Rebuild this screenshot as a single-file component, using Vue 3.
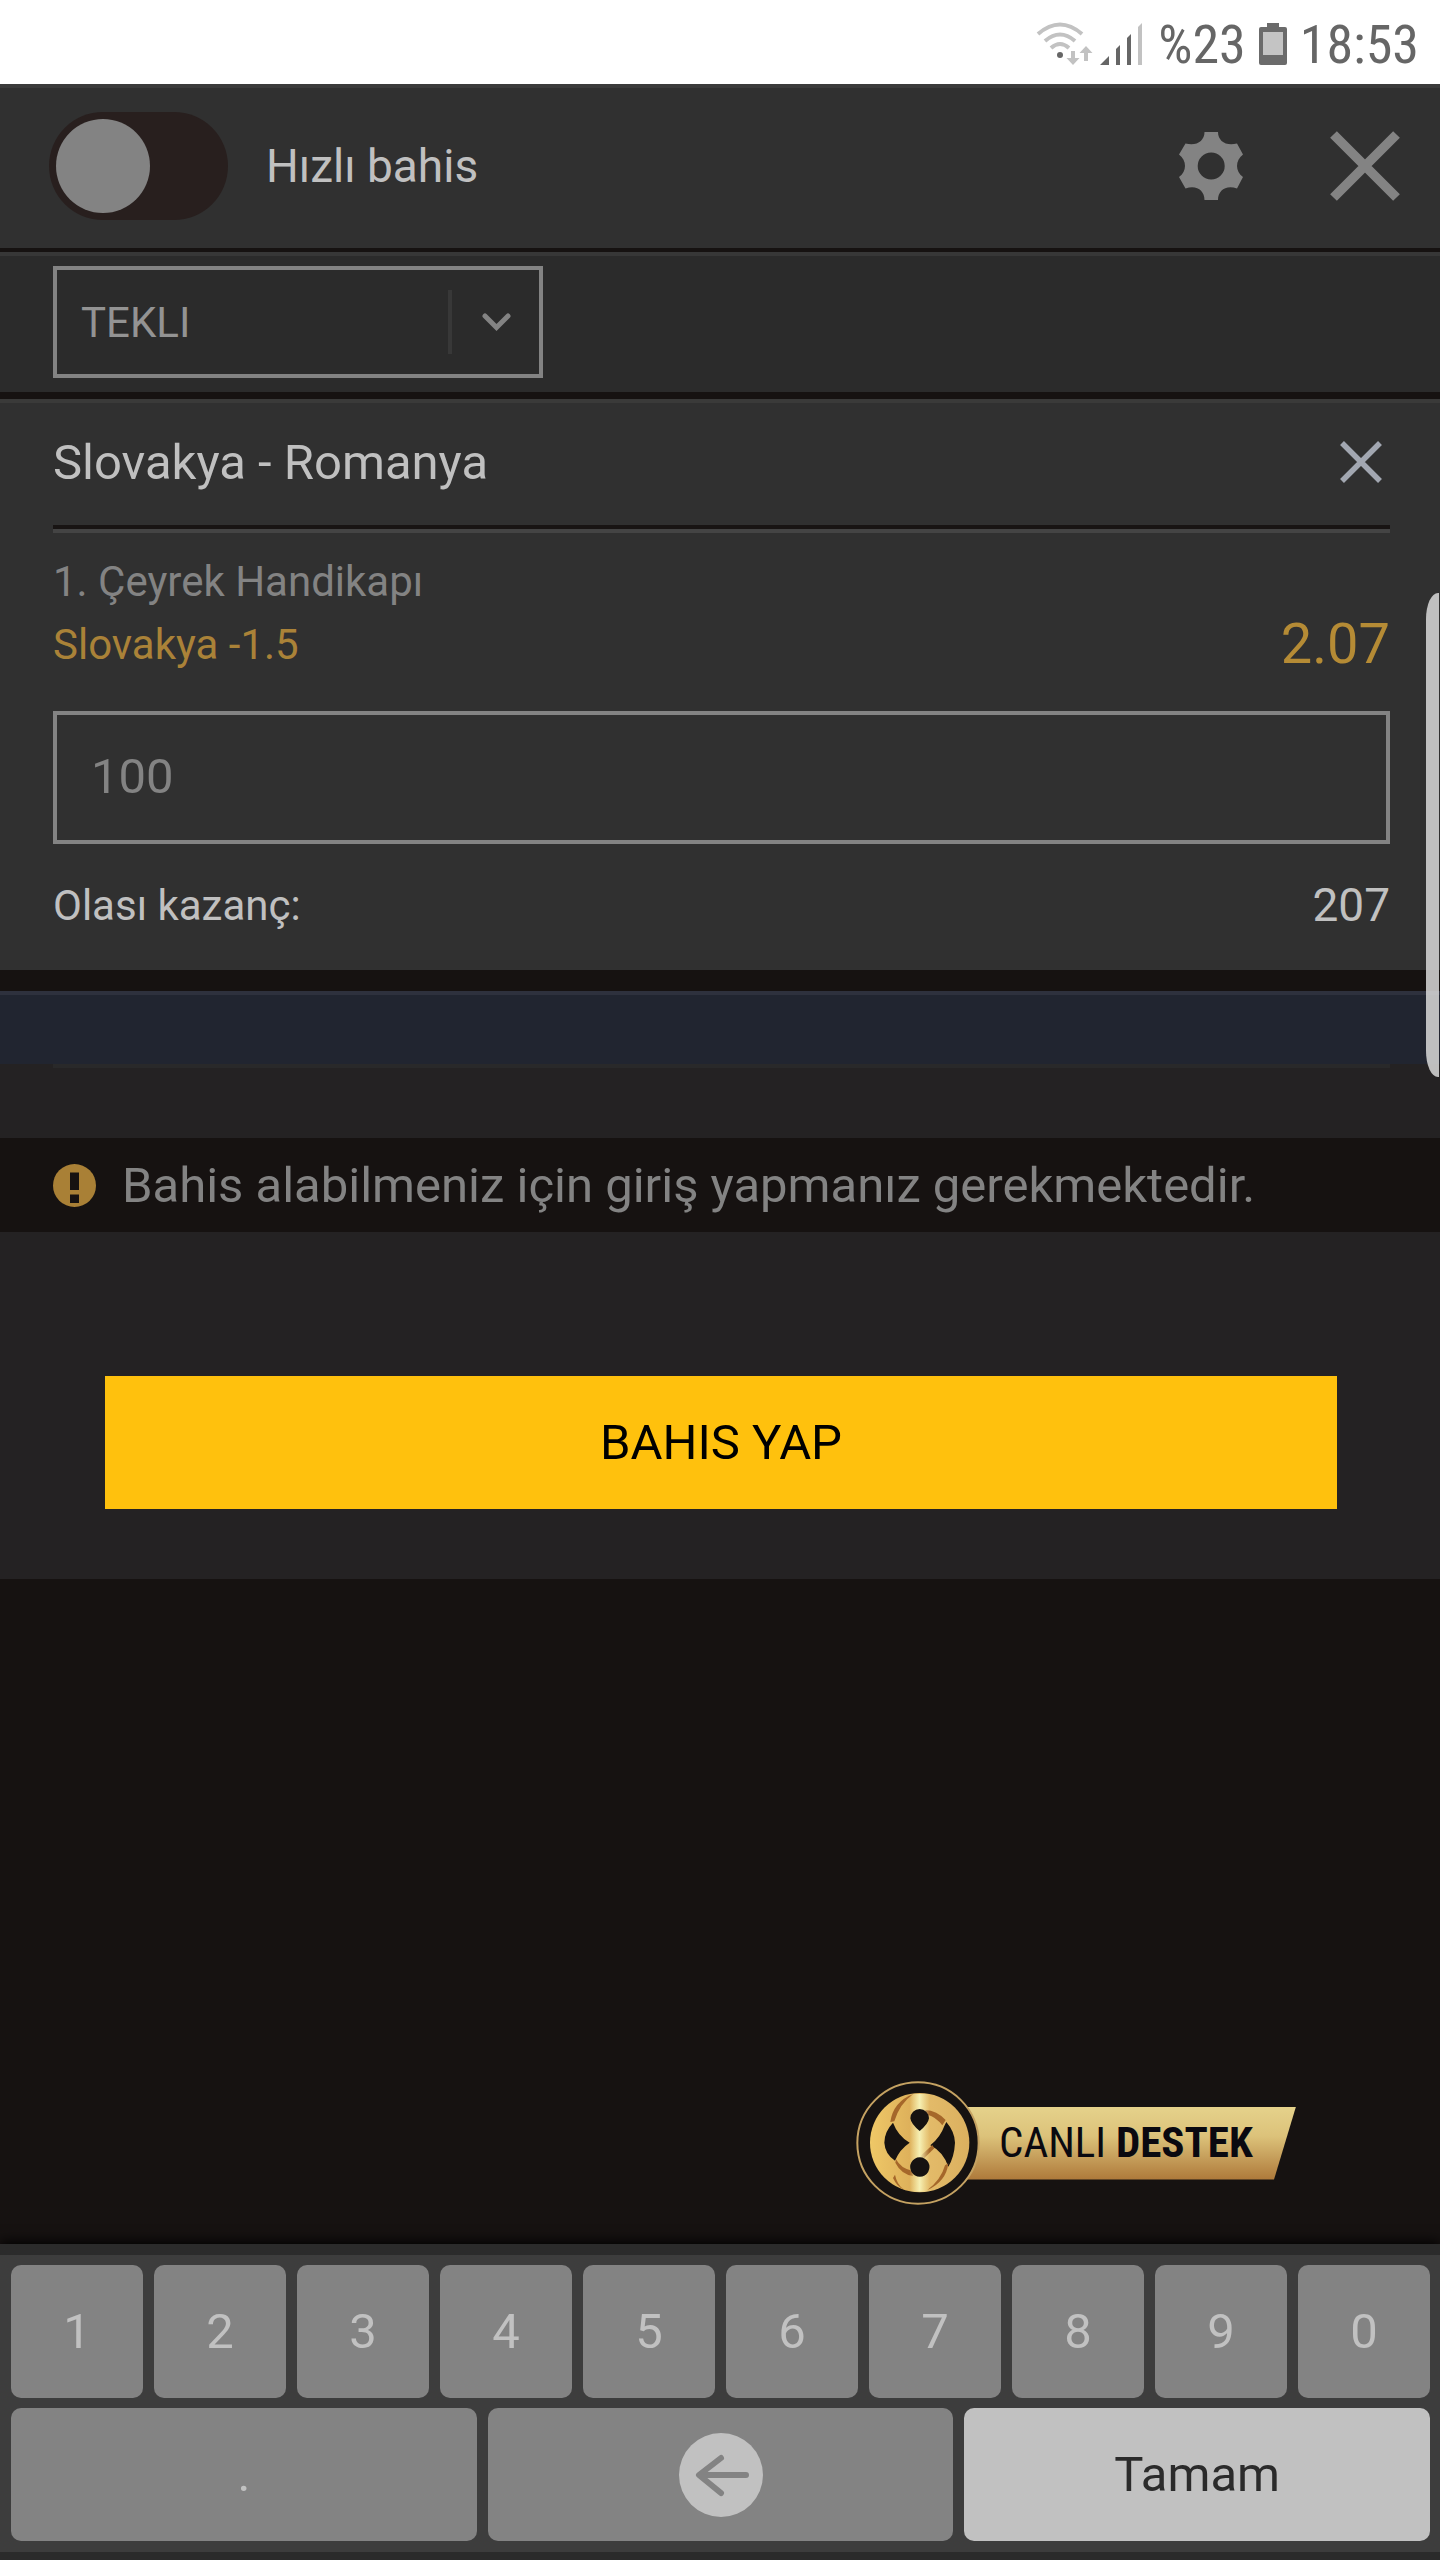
<script setup>
import { ref } from 'vue'

const quickBet = ref(false)
const betType = ref('tekli')
const stake = ref('100')
const digits = ['1', '2', '3', '4', '5', '6', '7', '8', '9', '0']

function press(key) {
  stake.value += key
}
function erase() {
  stake.value = stake.value.slice(0, -1)
}
</script>

<template>
  <div class="screen">
    <div class="status">
      <svg class="wifi" width="58" height="44" viewBox="0 0 58 44" aria-hidden="true">
        <g fill="none" stroke="#c2c2c2" stroke-width="4">
          <path d="M2 12Q24 -7 46 12" />
          <path d="M9 19Q24 6 39 19" />
          <path d="M15 26Q24 18 33 26" />
        </g>
        <circle cx="24" cy="33" r="3" fill="#666" />
        <path d="M35 29h4v7h4.500L37 43l-6.500-7H35zM48 39h4v-8h4.500L50 24l-6.500 7H48z" fill="#c2c2c2" />
      </svg>
      <svg class="signal" width="43" height="42" viewBox="0 0 43 42" aria-hidden="true">
        <path d="M0 42l9-9v9zM16 42V26l4-4v20zM27 42V15l4-4v31z" fill="#666" />
        <path d="M38 42V4l4-4v42z" fill="#c2c2c2" />
      </svg>
      <span class="percent">%23</span>
      <svg class="battery" width="28" height="42" viewBox="0 0 28 42" aria-hidden="true">
        <path d="M8 0h12v4h6q2 0 2 2v34q0 2-2 2H2q-2 0-2-2V6q0-2 2-2h6z" fill="#6b6b6b" />
        <path d="M4 9h20v23H4z" fill="#c4c4c4" />
      </svg>
      <span class="clock">18:53</span>
    </div>

    <header class="top">
      <label class="quick">
        <input v-model="quickBet" type="checkbox" class="switch" />
        <span>Hızlı bahis</span>
      </label>
      <button type="button" class="icon gear" aria-label="Ayarlar">
        <svg width="64" height="68" viewBox="0 0 64 68">
          <path fill="#838383" fill-rule="evenodd" d="M25.500 0h13.500c0 9 8 14.500 19 11.500l6 11c-8 6-8 17 0 22.500l-6 11.500c-11-4-19 2-19 11.500h-13.500c0-9.500-8-15.500-19-11.500l-6.500-11.500c8-5.500 8-16.500 0-22.500l6.500-11c11 3 19-2.500 19-11.500zM32.200 20.500a13.500 13.500 0 1 0 0 27a13.500 13.500 0 1 0 0-27z" />
        </svg>
      </button>
      <button type="button" class="icon" aria-label="Kapat">
        <svg width="70" height="70" viewBox="0 0 70 70">
          <path d="M3.500 3.500l63 63M66.500 3.500l-63 63" stroke="#838383" stroke-width="9.500" />
        </svg>
      </button>
    </header>

    <div class="type-bar">
      <div class="picker">
        <select v-model="betType" aria-label="Bahis türü">
          <option value="tekli">TEKLI</option>
        </select>
        <svg class="arrow" width="64" height="64" viewBox="0 0 64 64" aria-hidden="true">
          <path d="M0 0h4v64H0z" fill="#383838" />
          <path d="M37 26l11.500 11.500L60 26" fill="none" stroke="#838383" stroke-width="5" stroke-linecap="round" />
        </svg>
      </div>
    </div>

    <main>
      <section class="bet">
        <div class="match">
          <h1>Slovakya - Romanya</h1>
          <button type="button" class="icon" aria-label="Sil">
            <svg width="42" height="42" viewBox="0 0 42 42">
              <path d="M2 2l38 38M40 2L2 40" stroke="#a2a7b1" stroke-width="5.500" />
            </svg>
          </button>
        </div>
        <div class="market">1. Çeyrek Handikapı</div>
        <div class="pick">
          <span>Slovakya -1.5</span>
          <span class="odds">2.07</span>
        </div>
        <input v-model="stake" class="stake" type="text" inputmode="decimal" aria-label="Miktar" />
        <div class="win">
          <span>Olası kazanç:</span>
          <output>207</output>
        </div>
      </section>

      <div class="band"></div>
      <section class="place">
        <div class="rule"></div>
        <p class="notice">
          <svg width="43" height="43" viewBox="0 0 43 43" aria-hidden="true">
            <circle cx="21.500" cy="21.500" r="21.500" fill="#a98036" />
            <path d="M17 8.500h9V26h-9zM17 30.500h9V39h-9z" fill="#161211" />
          </svg>
          <span>Bahis alabilmeniz için giriş yapmanız gerekmektedir.</span>
        </p>
        <button type="button" class="submit">BAHIS YAP</button>
      </section>
    </main>

    <div class="rest">
      <button type="button" class="support">
        <svg class="logo" width="124" height="124" viewBox="49 63 372 372" aria-hidden="true">
          <defs>
            <linearGradient id="gold" x1="0" x2="1">
              <stop offset="0" stop-color="#efc867" />
              <stop offset="0.400" stop-color="#deb15b" />
              <stop offset="0.500" stop-color="#e5bd6b" />
              <stop offset="1" stop-color="#dbb05f" />
            </linearGradient>
            <linearGradient id="shine" x1="0" x2="1">
              <stop offset="0" stop-color="#f4e9a6" stop-opacity="0" />
              <stop offset="0.500" stop-color="#f6f0b4" />
              <stop offset="1" stop-color="#f4e9a6" stop-opacity="0" />
            </linearGradient>
          </defs>
          <circle cx="235" cy="249" r="182" fill="#161211" stroke="#c5a262" stroke-width="6" />
          <circle cx="240" cy="248" r="149" fill="url(#gold)" />
          <path fill="#161211" d="M160 188Q134 215 134 248Q136 282 166 302Q180 268 210 248Q175 228 160 188zM314 198L320 186Q345 215 346 248Q344 290 326 320Q310 275 272 256Q302 232 314 198z" />
          <g fill="#a5672a">
            <path d="M152 186Q160 125 222 101Q180 130 164 184z" />
            <path d="M256 150Q292 152 318 180L308 196Q288 170 264 164z" />
            <path d="M169 298Q184 326 217 332L220 348Q184 342 167 308z" />
            <path d="M240 290L278 255L284 265L254 294z" />
            <path d="M326 310Q320 365 262 391Q304 360 316 316z" />
            <path d="M166 344Q172 374 192 388Q172 380 160 354z" />
          </g>
          <path fill="url(#shine)" d="M210 102H270V395H210z" />
          <path fill="#161211" d="M240 147a28 28 0 0 1 28 28Q266 192 240 213Q214 192 212 175a28 28 0 0 1 28-28zM240 292a29 29 0 1 0 1 0z" />
        </svg>
        <span class="ribbon">CANLI <b>DESTEK</b></span>
      </button>
    </div>

    <div class="keyboard">
      <div class="keys">
        <button v-for="d in digits" :key="d" type="button" @click="press(d)">{{ d }}</button>
      </div>
      <div class="keys">
        <button type="button" @click="press('.')">.</button>
        <button type="button" aria-label="Geri sil" @click="erase">
          <svg width="84" height="84" viewBox="0 0 84 84">
            <circle cx="42" cy="42" r="42" fill="#c1c1c1" />
            <path d="M67 42H21M42 25L20 42L42 60" fill="none" stroke="#838383" stroke-width="6" stroke-linecap="round" stroke-linejoin="round" />
          </svg>
        </button>
        <button type="button" class="done">Tamam</button>
      </div>
    </div>
  </div>
</template>

<style>
body {
  background: #161211;
}
</style>

<style scoped>
* {
  box-sizing: border-box;
}

.screen {
  display: flex;
  flex-direction: column;
  position: relative;
  min-height: 100vh;
  background: #161211;
  color: #c0c0c0;
  font-family: Roboto, sans-serif;
  font-size: 42px;
}

.screen::after {
  content: '';
  position: absolute;
  top: 593px;
  right: 1px;
  width: 13px;
  height: 484px;
  border-radius: 12px 0 0 12px / 26px 0 0 26px;
  background: rgba(220, 220, 220, 0.84);
}

button,
select,
input {
  margin: 0;
  padding: 0;
  border: 0;
  border-radius: 0;
  background: none;
  color: inherit;
  font: inherit;
  appearance: none;
}

svg {
  display: block;
}

.status {
  display: flex;
  align-items: center;
  justify-content: flex-end;
  height: 84px;
  padding: 4px 21px 0 0;
  background: #fff;
  color: #666;
  font-family: 'Roboto Condensed', Roboto, sans-serif;
  font-size: 54px;
}

.wifi {
  margin-right: 6px;
}

.signal {
  margin-right: 15px;
}

.battery {
  margin: 0 13px;
}

.top {
  display: flex;
  align-items: center;
  height: 164px;
  margin-bottom: 4px;
  padding: 0 40px 4px 49px;
  border-top: 4px solid #3b3b3b;
  background: #303030;
}

.quick {
  display: flex;
  align-items: center;
  gap: 38px;
  margin-right: auto;
  font-size: 46px;
}

.switch {
  width: 179px;
  height: 108px;
  padding: 7px;
  border-radius: 54px;
  background: #281f1e;
}

.switch::before {
  content: '';
  display: block;
  width: 94px;
  height: 94px;
  border-radius: 50%;
  background: #838383;
}

.switch:checked::before {
  margin-left: auto;
}

.gear {
  margin-right: 87px;
}

.type-bar {
  height: 140px;
  margin-bottom: 7px;
  padding: 10px 53px 0;
  border-top: 4px solid #373737;
  background: #2b2b2b;
}

.picker {
  position: relative;
  width: 490px;
}

.picker select {
  display: block;
  width: 100%;
  height: 112px;
  padding: 0 96px 0 24px;
  border: 4px solid #838383;
  color: #939393;
}

.arrow {
  position: absolute;
  top: 24px;
  right: 31px;
  pointer-events: none;
}

.bet {
  padding: 0 50px 0 53px;
  border-top: 4px solid #3a3a39;
  background: #303030;
}

.match {
  display: flex;
  align-items: center;
  justify-content: space-between;
  height: 126px;
  margin-bottom: 21px;
  padding: 0 8px 4px 0;
  border-bottom: 4px solid #181413;
  box-shadow: 0 4px #444;
}

.match h1 {
  margin: 0;
  font-size: 49px;
  font-weight: 400;
}

.market {
  color: #838383;
  line-height: 63px;
}

.pick {
  display: flex;
  justify-content: space-between;
  color: #aa8238;
  line-height: 63px;
}

.odds {
  color: #b58b35;
  font-size: 56px;
}

.stake {
  display: block;
  width: 100%;
  height: 133px;
  margin-top: 35px;
  padding: 0 34px 2px;
  border: 4px solid #838383;
  color: #838383;
  font-size: 49px;
}

.win {
  display: flex;
  align-items: center;
  justify-content: space-between;
  height: 126px;
  padding-bottom: 4px;
}

.win output {
  font-size: 46px;
}

.band {
  height: 73px;
  margin-top: 21px;
  border-top: 4px solid #2e313d;
  background: #212530;
}

.place {
  padding-bottom: 70px;
  background: #242223;
}

.rule {
  height: 4px;
  margin: 0 50px 70px 53px;
  background: #29292a;
}

.notice {
  display: flex;
  align-items: center;
  gap: 26px;
  height: 94px;
  margin: 0 0 144px;
  padding: 0 53px;
  background: #161211;
  color: #838383;
  font-size: 49px;
}

.submit {
  display: block;
  width: calc(100% - 208px);
  height: 133px;
  margin: 0 103px 0 105px;
  background: #ffc10d;
  color: #000;
  font-size: 49px;
}

.rest {
  display: flex;
  flex: 1;
  align-items: flex-end;
  justify-content: flex-end;
  padding: 0 144px 39px 0;
}

.support {
  display: flex;
  align-items: center;
}

.logo {
  position: relative;
  z-index: 1;
  flex: none;
}

.ribbon {
  width: 330px;
  height: 73px;
  margin-left: -14px;
  padding-left: 33px;
  background: linear-gradient(#e5d28b, #dcc27a 40%, #ae793a);
  clip-path: polygon(0 0, 100% 0, 308px 100%, 0 100%);
  color: #0a0910;
  font-family: 'Roboto Condensed', Roboto, sans-serif;
  font-size: 43px;
  line-height: 71px;
  text-align: left;
  white-space: nowrap;
}

.keyboard {
  display: grid;
  gap: 10px;
  padding: 10px 10px 11px 11px;
  border-top: 11px solid #2b2b2b;
  border-bottom: 8px solid #2b2b2b;
  background: #3d3d3d;
  box-shadow: 0 -2px 12px #000;
}

.keys {
  display: flex;
  gap: 11px;
}

.keys button {
  display: flex;
  flex: 1;
  align-items: center;
  justify-content: center;
  height: 133px;
  border-radius: 10px;
  background: #838383;
  color: #c1c1c1;
  font-size: 49px;
}

.keys .done {
  background: #c1c1c1;
  color: #2b2b2b;
}
</style>
